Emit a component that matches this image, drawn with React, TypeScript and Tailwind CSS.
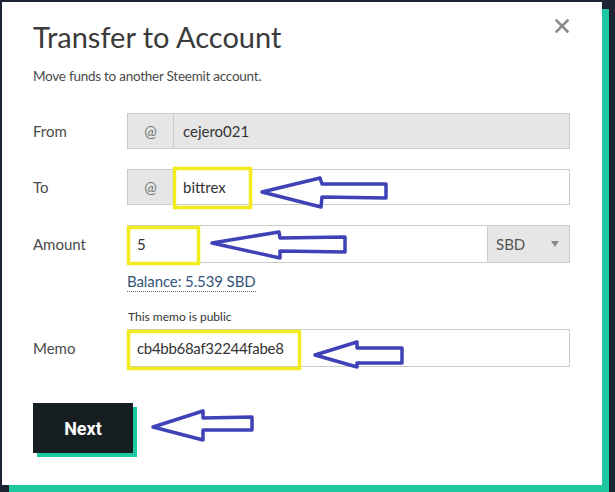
import React from "react";

const font = { fontFamily: "Lato, 'Open Sans', sans-serif" };

function AtInput({ value, disabled }: { value: string; disabled?: boolean }) {
  return (
    <div className={`flex h-[36px] w-full border border-[#cacaca] ${disabled ? "bg-[#e6e6e6]" : "bg-white"}`}>
      <div className="flex w-[46px] items-center justify-center border-r border-[#cacaca] bg-[#e6e6e6] text-[15px] text-[#777]">@</div>
      <div className="flex flex-1 items-center pl-[9px] text-[15px] text-[#333]">{value}</div>
    </div>
  );
}

export default function App() {
  return (
    <div className="h-[492px] w-[615px] overflow-hidden bg-[#1d2535] pl-[2px] pt-[2px]" style={font}>
      <div className="relative h-[483px] w-[600px] bg-white pl-[31px] pr-[32px] pt-[17px] shadow-[7px_7px_0_#1ec9a2]">
        <button className="absolute right-[33px] top-[17px] flex h-[14px] w-[14px] items-center justify-center">
          <svg width="14" height="14" viewBox="0 0 14 14">
            <path d="M1.5 1.5 L12.5 12.5 M12.5 1.5 L1.5 12.5" stroke="#8a8a8a" strokeWidth="2.6" strokeLinecap="square" />
          </svg>
        </button>
        <h1 className="text-[29px] leading-[36px] font-normal text-[#3a3a3a]">Transfer to Account</h1>
        <p className="mt-[11px] text-[13.5px] leading-[20px] tracking-[-0.25px] text-[#4a4a4a]">Move funds to another Steemit account.</p>

        <div className="mt-[27px] flex items-center">
          <div className="w-[94px] text-[15px] text-[#4a4a4a]">From</div>
          <div className="flex-1"><AtInput value="cejero021" disabled /></div>
        </div>

        <div className="mt-[20px] flex items-center">
          <div className="w-[94px] text-[15px] text-[#4a4a4a]">To</div>
          <div className="flex-1"><AtInput value="bittrex" /></div>
        </div>

        <div className="mt-[20px] flex items-start">
          <div className="flex h-[38px] w-[94px] items-center text-[15px] text-[#4a4a4a]">Amount</div>
          <div className="flex-1">
            <div className="flex h-[38px] border border-[#cacaca]">
              <div className="flex flex-1 items-center pl-[9px] text-[15px] text-[#333]">5</div>
              <div className="flex w-[82px] items-center justify-between border-l border-[#cacaca] bg-[#e6e6e6] pl-[8px] pr-[10px] text-[15px] text-[#555]">
                <span>SBD</span>
                <svg width="8" height="6" viewBox="0 0 8 6"><path d="M0 0 L8 0 L4 6 Z" fill="#888" /></svg>
              </div>
            </div>
            <div className="mt-[8px] flex">
              <span className="border-b border-dotted border-[#666] text-[15px] leading-[20px] tracking-[-0.1px] text-[#36557a]">Balance: 5.539 SBD</span>
            </div>
          </div>
        </div>

        <div className="mt-[17px] flex items-end">
          <div className="flex h-[38px] w-[94px] items-center text-[15px] text-[#4a4a4a]">Memo</div>
          <div className="flex-1">
            <div className="pl-[1px] text-[12px] leading-[16px] text-[#333]">This memo is public</div>
            <div className="mt-[4px] flex h-[38px] items-center border border-[#cacaca] pl-[9px] text-[15px] tracking-[-0.3px] text-[#333]">cb4bb68af32244fabe8</div>
          </div>
        </div>

        <button className="mt-[36px] flex h-[50px] w-[100px] items-center justify-center bg-[#171e22] text-[18px] font-bold text-white shadow-[4px_4px_0_#1ec9a2]" style={{ fontFamily: "Roboto, Arial, sans-serif" }}>
          Next
        </button>
      </div>

      <svg className="pointer-events-none absolute left-0 top-0" width="615" height="492" viewBox="0 0 615 492">
        <g fill="none" stroke="#f3ec1c" strokeWidth="3.5">
          <rect x="174.5" y="168.5" width="76" height="39" />
          <rect x="128.5" y="227.5" width="70" height="36" />
          <rect x="128.5" y="331.5" width="171" height="37" />
        </g>
        <g fill="none" stroke="#3f41b6" strokeWidth="3.5" strokeLinejoin="round">
          <path d="M262 192 L320 178 L322 184 L386 184 L386 198 L322 197 L321 207 Z" />
          <path d="M212 243 L279 232 L280 238 L345 237 L345 252 L280 251 L280 258 Z" />
          <path d="M315 355 L357 342 L357 348 L402 348 L402 363 L357 363 L357 367 Z" />
          <path d="M153 427 L203 411 L203 418 L252 417 L252 430 L203 430 L203 440 Z" />
        </g>
      </svg>
    </div>
  );
}
